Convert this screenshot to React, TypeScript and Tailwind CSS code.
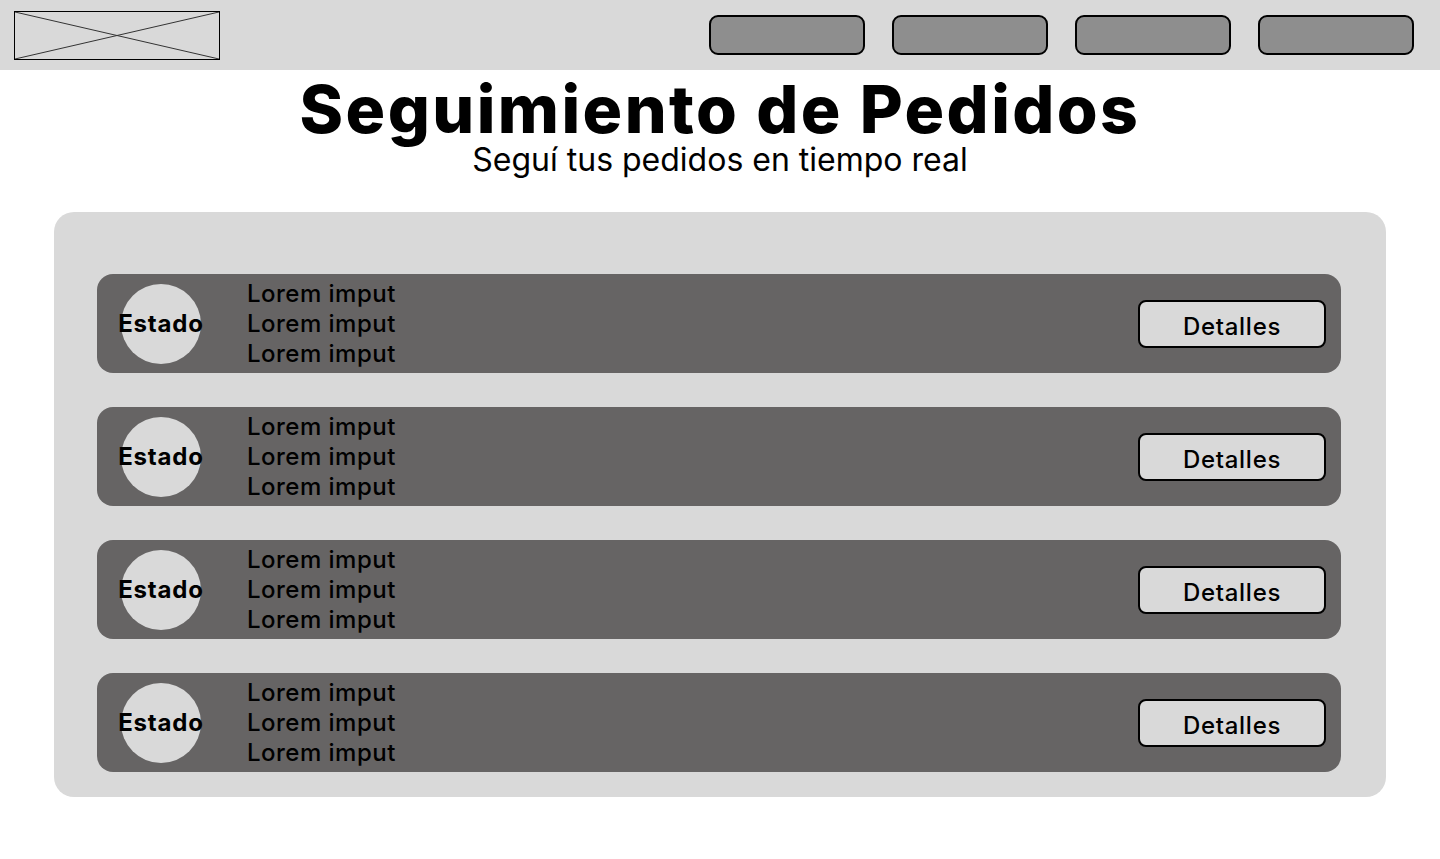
const navButtons = [1, 2, 3, 4];

const orders = [1, 2, 3, 4];

const App = () => {
  return (
    <div className="min-h-screen bg-white font-['Inter',sans-serif] text-black">
      {/* header */}
      <header className="flex h-[70px] items-center justify-between bg-[#d9d9d9] pl-[14px] pr-[26px]">
        <div className="h-[49px] w-[206px] border border-black">
          <svg className="h-full w-full" viewBox="0 0 204 47" preserveAspectRatio="none">
            <line x1="0" y1="0" x2="204" y2="47" stroke="#333" strokeWidth="1" />
            <line x1="204" y1="0" x2="0" y2="47" stroke="#333" strokeWidth="1" />
          </svg>
        </div>
        <nav className="flex gap-[27px]">
          {navButtons.map((b) => (
            <button
              key={b}
              className="h-[40px] w-[156px] rounded-[9px] border-2 border-black bg-[#8e8e8e]"
            />
          ))}
        </nav>
      </header>

      <div className="text-center">
        <h1 className="mt-[9px] text-[66px] font-extrabold leading-[60px] tracking-[0.037em]">
          Seguimiento de Pedidos
        </h1>
        <p className="mt-[7px] text-[32px] leading-[28px]">Seguí tus pedidos en tiempo real</p>
      </div>

      <section className="mx-[54px] mt-[38px] flex flex-col gap-[34px] rounded-[20px] bg-[#d9d9d9] pb-[25px] pl-[43px] pr-[45px] pt-[62px]">
        {orders.map((o) => (
          <div
            key={o}
            className="flex h-[99px] items-center rounded-[16px] bg-[#666464] pl-[24px] pr-[15px]"
          >
            <div className="flex h-[80px] w-[80px] shrink-0 items-center justify-center rounded-full bg-[#d9d9d9]">
              <span className="whitespace-nowrap text-[24px] font-bold tracking-[0.035em]">Estado</span>
            </div>
            <div className="ml-[46px] flex flex-col text-[24px] font-medium leading-[30px] tracking-[0.02em]">
              <span>Lorem imput</span>
              <span>Lorem imput</span>
              <span>Lorem imput</span>
            </div>
            <button className="ml-auto h-[48px] w-[188px] rounded-[8px] border-2 border-black bg-[#d9d9d9] pt-[6px] text-[24px] font-medium tracking-[0.03em]">
              Detalles
            </button>
          </div>
        ))}
      </section>
    </div>
  );
};

export default App;
